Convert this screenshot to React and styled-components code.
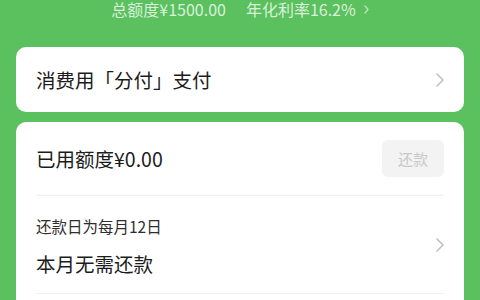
import React from "react";
import styled, { createGlobalStyle } from "styled-components";

const GlobalStyle = createGlobalStyle`
  html, body {
    margin: 0;
    padding: 0;
    background: #5ac15e;
    font-family: "Noto Sans CJK SC", "Noto Sans", sans-serif;
  }
`;

const Page = styled.div`
  width: 480px;
  height: 300px;
  overflow: hidden;
  background: #5ac15e;
`;

const Summary = styled.div`
  height: 47px;
  display: flex;
  justify-content: center;
  align-items: flex-start;
  gap: 20px;
  padding-top: 1px;
  box-sizing: border-box;
`;

const SummaryItem = styled.div`
  display: flex;
  align-items: center;
  gap: 8px;
  font-size: 16px;
  line-height: 16px;
  color: rgba(255, 255, 255, 0.78);
`;

const Cards = styled.div`
  display: flex;
  flex-direction: column;
  gap: 10px;
  padding: 0 16px;
`;

const Card = styled.div`
  background: #ffffff;
  border-radius: 10px;
  padding: 0 20px;
`;

const Row = styled.div`
  display: flex;
  align-items: center;
  justify-content: space-between;
  height: ${(p) => p.$height}px;
`;

const Title = styled.div`
  font-size: 19.5px;
  color: #1c1c1c;
  line-height: 26px;
`;

const Hint = styled.div`
  font-size: 15.5px;
  color: #2e2e2e;
  line-height: 20px;
  margin-bottom: 15px;
`;

const Stack = styled.div`
  display: flex;
  flex-direction: column;
  padding-top: 4px;
`;

const Divider = styled.div`
  height: 1px;
  background: #f1f1f1;
`;

const RepayButton = styled.button`
  width: 62px;
  height: 37px;
  border: none;
  border-radius: 6px;
  background: #f3f3f3;
  color: #c9c9c9;
  font-family: inherit;
  font-size: 15px;
  padding: 0;
  margin-top: -1px;
`;

const Chevron = ({ color = "#bdbdbd", w = 8, h = 14, sw = 1.5 }) => (
  <svg width={w} height={h} viewBox={`0 0 ${w} ${h}`} fill="none">
    <polyline
      points={`1,1 ${w - 1},${h / 2} 1,${h - 1}`}
      stroke={color}
      strokeWidth={sw}
      strokeLinecap="round"
      strokeLinejoin="round"
    />
  </svg>
);

export default function App() {
  return (
    <Page>
      <GlobalStyle />
      <Summary>
        <SummaryItem>总额度¥1500.00</SummaryItem>
        <SummaryItem>
          年化利率16.2%
          <Chevron color="rgba(255,255,255,0.6)" w={5} h={9} sw={1.2} />
        </SummaryItem>
      </Summary>
      <Cards>
        <Card>
          <Row $height={65}>
            <Title>消费用「分付」支付</Title>
            <Chevron />
          </Row>
        </Card>
        <Card>
          <Row $height={73}>
            <Title>已用额度¥0.00</Title>
            <RepayButton>还款</RepayButton>
          </Row>
          <Divider />
          <Row $height={97}>
            <Stack>
              <Hint>还款日为每月12日</Hint>
              <Title>本月无需还款</Title>
            </Stack>
            <Chevron />
          </Row>
          <Divider />
          <Row $height={60} />
        </Card>
      </Cards>
    </Page>
  );
}
